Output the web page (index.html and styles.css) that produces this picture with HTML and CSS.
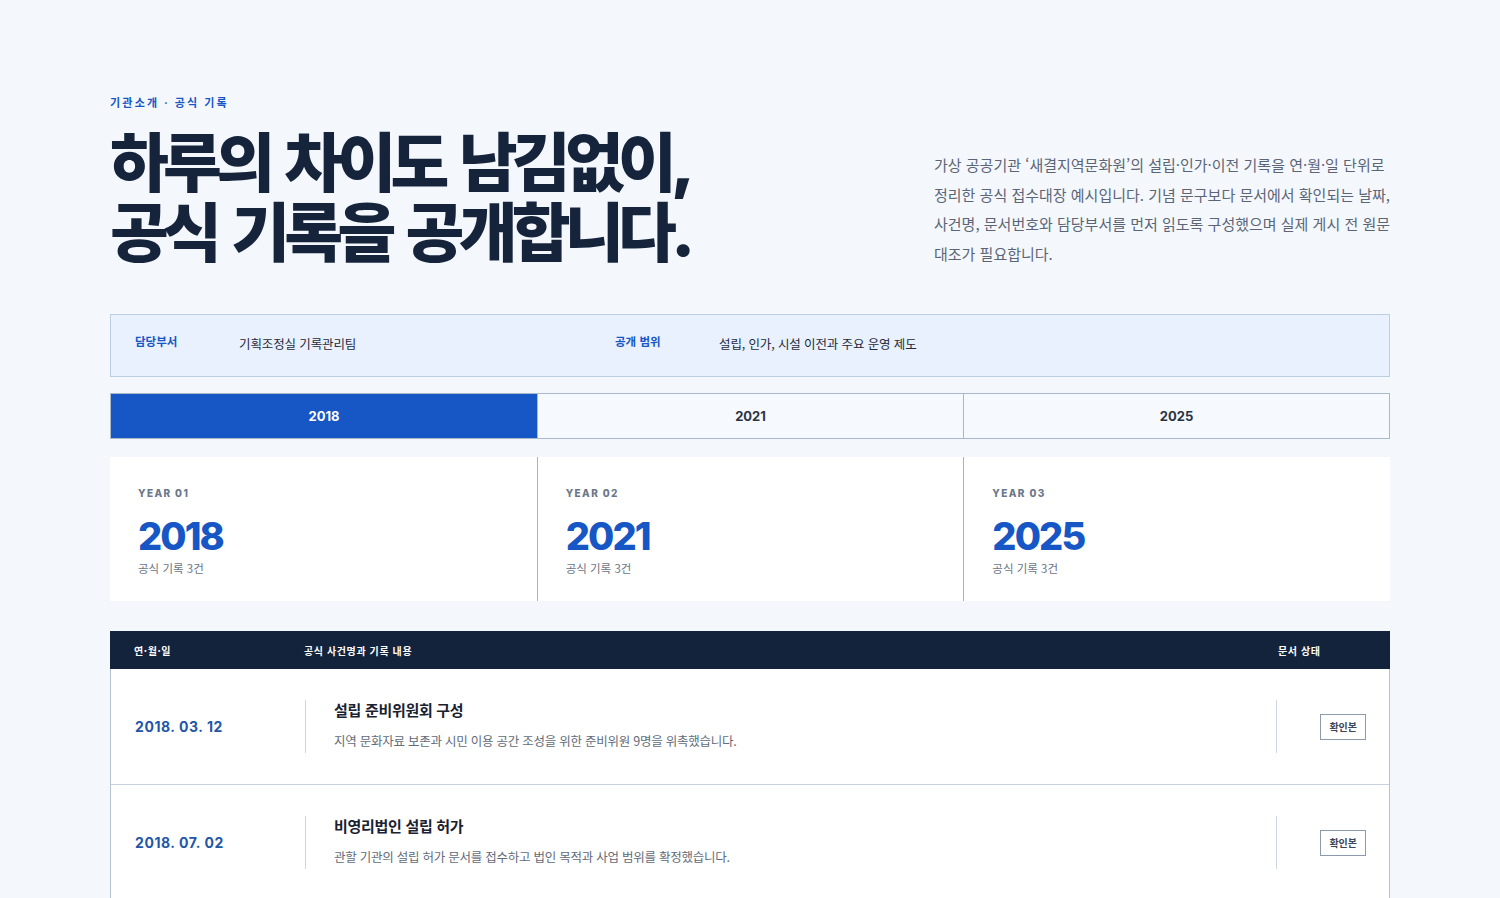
FILE: index.html
```html
<!DOCTYPE html>
<html lang="ko">
<head>
<meta charset="utf-8">
<title>공식 기록</title>
<link rel="stylesheet" href="styles.css">
</head>
<body>
<main class="page">
  <header class="hero">
    <div class="hero-left">
      <p class="eyebrow">기관소개 · 공식 기록</p>
      <h1 class="title">하루의 차이도 남김없이,<br>공식 기록을 공개합니다.</h1>
    </div>
    <p class="lead">가상 공공기관 ‘새결지역문화원’의 설립·인가·이전 기록을 연·월·일 단위로 정리한 공식 접수대장 예시입니다. 기념 문구보다 문서에서 확인되는 날짜, 사건명, 문서번호와 담당부서를 먼저 읽도록 구성했으며 실제 게시 전 원문 대조가 필요합니다.</p>
  </header>

  <section class="info">
    <span class="info-label">담당부서</span>
    <span class="info-value">기획조정실 기록관리팀</span>
    <span class="info-label">공개 범위</span>
    <span class="info-value">설립, 인가, 시설 이전과 주요 운영 제도</span>
  </section>

  <nav class="tabs">
    <button class="tab active">2018</button>
    <button class="tab">2021</button>
    <button class="tab">2025</button>
  </nav>

  <section class="years">
    <div class="year-card">
      <span class="year-kicker">YEAR 01</span>
      <strong class="year-num">2018</strong>
      <span class="year-count">공식 기록 3건</span>
    </div>
    <div class="year-card">
      <span class="year-kicker">YEAR 02</span>
      <strong class="year-num">2021</strong>
      <span class="year-count">공식 기록 3건</span>
    </div>
    <div class="year-card">
      <span class="year-kicker">YEAR 03</span>
      <strong class="year-num">2025</strong>
      <span class="year-count">공식 기록 3건</span>
    </div>
  </section>

  <section class="table">
    <div class="thead">
      <span>연·월·일</span>
      <span>공식 사건명과 기록 내용</span>
      <span>문서 상태</span>
    </div>
    <div class="row">
      <div class="date">2018. 03. 12</div>
      <div class="content">
        <h3 class="event">설립 준비위원회 구성</h3>
        <p class="desc">지역 문화자료 보존과 시민 이용 공간 조성을 위한 준비위원 9명을 위촉했습니다.</p>
      </div>
      <div class="status"><span class="badge">확인본</span></div>
    </div>
    <div class="row">
      <div class="date">2018. 07. 02</div>
      <div class="content">
        <h3 class="event">비영리법인 설립 허가</h3>
        <p class="desc">관할 기관의 설립 허가 문서를 접수하고 법인 목적과 사업 범위를 확정했습니다.</p>
      </div>
      <div class="status"><span class="badge">확인본</span></div>
    </div>
  </section>
</main>
</body>
</html>
```

FILE: styles.css
```css
* { box-sizing: border-box; }
html, body { margin: 0; padding: 0; }
body {
  background: #f4f8fd;
  font-family: "Inter", "Noto Sans CJK KR", sans-serif;
  color: #15233b;
}
.page {
  width: 1280px;
  margin: 0 auto;
  padding-top: 94px;
}
.hero {
  display: grid;
  grid-template-columns: 1fr 456px;
  align-items: end;
}
.eyebrow {
  margin: 0 0 18px;
  font-size: 11px;
  font-weight: 700;
  letter-spacing: 0.2em;
  color: #1656c5;
}
.title {
  margin: 0;
  font-size: 64px;
  line-height: 70px;
  font-weight: 900;
  letter-spacing: -0.09em;
  word-spacing: 8px;
  color: #15233b;
}
.lead {
  margin: 0;
  font-size: 15px;
  line-height: 29.5px;
  color: #5b6577;
  font-family: "Noto Sans CJK KR", sans-serif;
}
.info {
  margin-top: 46px;
  display: grid;
  grid-template-columns: 80px 352px 80px 1fr;
  column-gap: 24px;
  align-items: center;
  padding: 14px 24px 18px;
  height: 63px;
  background: #e8f1fd;
  border: 1px solid #bccee2;
}
.info-label {
  font-size: 11.5px;
  font-weight: 700;
  color: #1656c5;
  font-family: "Noto Sans CJK KR", sans-serif;
  margin-top: -5px;
}
.info-value {
  font-size: 12.5px;
  color: #1f2a3c;
  font-family: "Noto Sans CJK KR", sans-serif;
  letter-spacing: -0.01em;
}
.tabs {
  margin-top: 16px;
  display: grid;
  grid-template-columns: 1fr 1fr 1fr;
  border: 1px solid #a9b8cb;
  height: 46px;
}
.tab {
  border: 0;
  border-left: 1px solid #a9b8cb;
  background: #f6f9fd;
  font-family: "Inter", sans-serif;
  font-size: 13px;
  font-weight: 700;
  color: #2a3344;
  padding: 0;
}
.tab:first-child { border-left: 0; }
.tab.active {
  background: #1656c5;
  color: #fff;
}
.years {
  margin-top: 18px;
  display: grid;
  grid-template-columns: 1fr 1fr 1fr;
  background: #fff;
  height: 144px;
}
.year-card {
  display: flex;
  flex-direction: column;
  padding: 30px 28px 0;
  border-left: 1px solid #a9b3bf;
}
.year-card:first-child { border-left: 0; }
.year-kicker {
  font-size: 10px;
  font-weight: 800;
  letter-spacing: 0.14em;
  color: #6b778a;
}
.year-num {
  margin-top: 17px;
  font-size: 38px;
  line-height: 40px;
  font-weight: 800;
  letter-spacing: -0.05em;
  color: #1656c5;
}
.year-count {
  margin-top: 4px;
  font-size: 11.5px;
  color: #6b7485;
  font-family: "Noto Sans CJK KR", sans-serif;
}
.table {
  margin-top: 30px;
  border-left: 1px solid #b5c3d3;
  border-right: 1px solid #b5c3d3;
}
.thead {
  display: grid;
  grid-template-columns: 170px 1fr 88px;
  align-items: center;
  height: 38px;
  padding: 0 24px;
  margin: 0 -1px;
  background: #14233c;
  color: #fff;
  font-size: 10px;
  font-weight: 700;
  letter-spacing: 0.06em;
  font-family: "Noto Sans CJK KR", sans-serif;
}
.row {
  display: grid;
  grid-template-columns: 170px 1fr 90px;
  align-items: center;
  padding: 31px 23px 31px 24px;
  background: #fff;
  border-bottom: 1px solid #c6d2de;
}
.date {
  font-size: 14px;
  font-weight: 700;
  color: #2356a8;
  letter-spacing: 0.04em;
}
.content {
  border-left: 1px solid #cdd6e0;
  padding-left: 28px;
  height: 53px;
}
.event {
  margin: 0;
  font-size: 15px;
  line-height: 20px;
  font-weight: 700;
  color: #1a2130;
  font-family: "Noto Sans CJK KR", sans-serif;
  letter-spacing: -0.02em;
}
.desc {
  margin: 12px 0 0;
  font-size: 12.5px;
  line-height: 18px;
  color: #626b7a;
  font-family: "Noto Sans CJK KR", sans-serif;
  letter-spacing: -0.02em;
}
.status {
  display: flex;
  justify-content: flex-end;
  align-items: center;
  border-left: 1px solid #cdd6e0;
  height: 53px;
}
.badge {
  display: inline-block;
  border: 1px solid #8d9aab;
  padding: 5px 8px;
  font-size: 10px;
  line-height: 14px;
  font-weight: 700;
  color: #3a4556;
  font-family: "Noto Sans CJK KR", sans-serif;
  background: #fff;
}
```
